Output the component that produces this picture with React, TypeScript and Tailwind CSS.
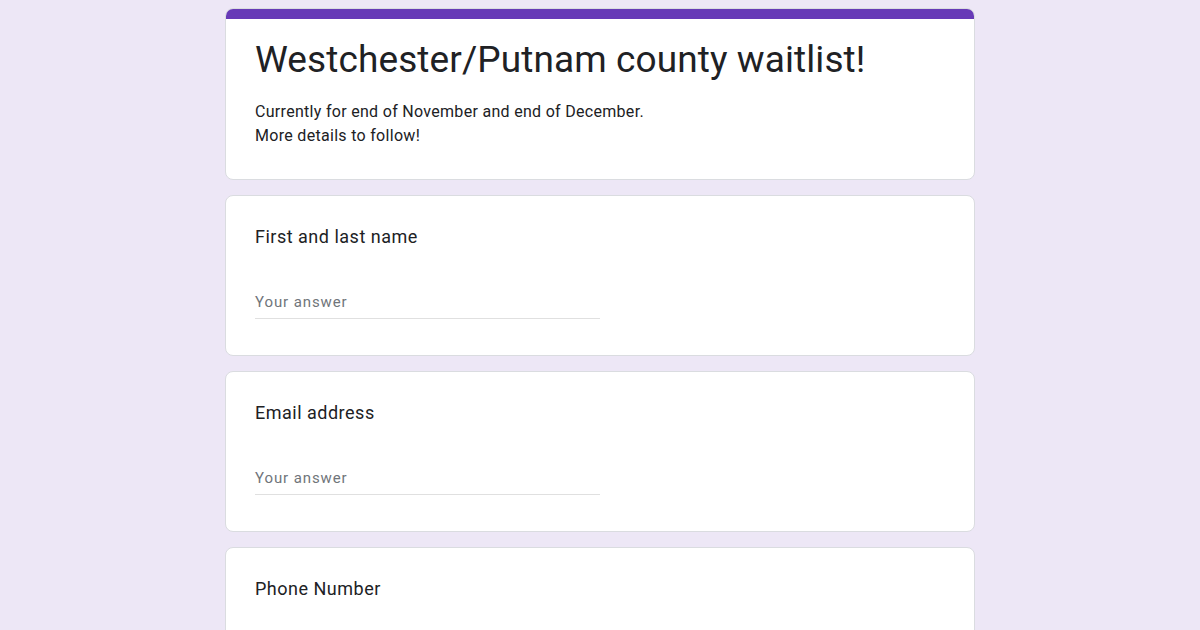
import React from "react";

const questions = ["First and last name", "Email address", "Phone Number"];

function QuestionCard({ label, last }: { label: string; last?: boolean }) {
  return (
    <div className="rounded-lg border border-[#dadce0] bg-white px-[29px] pt-[29px] pb-[36px]">
      <div className="text-[18px] leading-6 tracking-[0.5px] text-[#202124]">{label}</div>
      {!last && (
        <div className="mt-[43px] w-1/2 border-b border-[#e0e0e0] pb-[6px] text-[15px] leading-5 tracking-[0.9px] text-[#70757a]">
          Your answer
        </div>
      )}
      {last && <div className="h-[80px]" />}
    </div>
  );
}

export default function App() {
  return (
    <div
      className="h-[630px] overflow-hidden bg-[#ede7f6]"
      style={{ fontFamily: "Roboto, 'Liberation Sans', sans-serif" }}
    >
      <div className="mx-auto flex w-[750px] flex-col gap-[15px] pt-2">
        <div className="overflow-hidden rounded-lg border border-[#dadce0] bg-white">
          <div className="h-[10px] bg-[#673ab7]" />
          <div className="px-[29px] pt-[17px] pb-[31px]">
            <h1 className="text-[37px] leading-[48px] tracking-[0.1px] text-[#202124]">
              Westchester/Putnam county waitlist!
            </h1>
            <div className="mt-[16px] text-[16px] leading-6 tracking-[0.3px] text-[#202124]">
              <div>Currently for end of November and end of December.</div>
              <div>More details to follow!</div>
            </div>
          </div>
        </div>
        {questions.map((q, i) => (
          <QuestionCard key={q} label={q} last={i === questions.length - 1} />
        ))}
      </div>
    </div>
  );
}
